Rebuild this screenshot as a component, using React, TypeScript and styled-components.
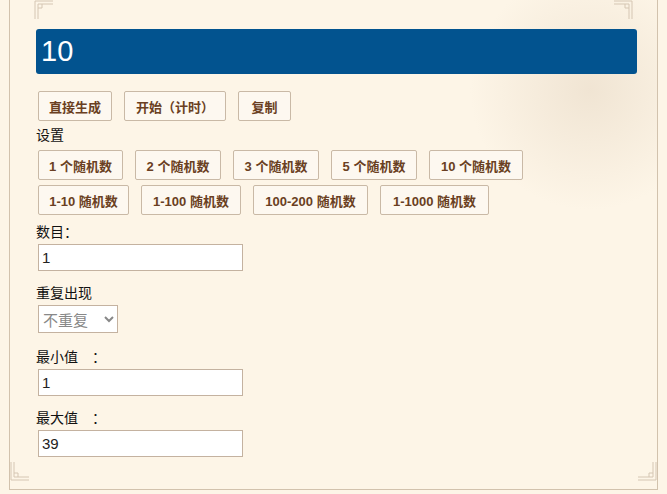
import React from "react";
import styled, { createGlobalStyle } from "styled-components";

const Global = createGlobalStyle`
  html, body { margin: 0; background: #fdf5e7; }
  body { font-family: "Microsoft YaHei", "Noto Sans CJK SC", "Liberation Sans", sans-serif; }
`;

const Frame = styled.div`
  position: relative;
  margin: 0 9px;
  height: 490px;
  box-sizing: border-box;
  border: 1px solid #d2c2ad;
  border-top: none;
  padding: 29px 20px 0 26px;
  background: radial-gradient(circle at 580px 90px, rgba(230,215,195,0.55), rgba(253,245,231,0) 120px), #fdf5e7;
`;

const Corner = styled.svg<{ $pos: string }>`
  position: absolute;
  width: 20px;
  height: 20px;
  ${(p) => p.$pos}
`;

const Display = styled.div`
  height: 45px;
  background: #02538f;
  border-radius: 3px;
  color: #fff;
  font-family: "Liberation Sans", sans-serif;
  font-size: 29px;
  line-height: 45px;
  padding-left: 5px;
  margin-bottom: 17px;
`;

const Row = styled.div`
  display: flex;
  gap: 12px;
  margin-left: 2px;
  margin-bottom: 5px;
`;

const Btn = styled.button<{ $w: number }>`
  width: ${(p) => p.$w}px;
  height: 30px;
  background: #fdf8f0;
  border: 1px solid #c9b9a6;
  border-radius: 2px;
  color: #6a3f22;
  font-weight: bold;
  font-size: 13px;
  font-family: "Liberation Sans", "Noto Sans CJK SC", sans-serif;
  padding: 0;
`;

const Label = styled.div`
  font-size: 14px;
  color: #111;
  height: 20px;
  line-height: 20px;
  margin: -3px 0 3px;
`;

const Input = styled.input`
  display: block;
  width: 205px;
  height: 27px;
  box-sizing: border-box;
  margin: 2px 0 14px 2px;
  border: 1px solid #c4b2a0;
  background: #fff;
  font-size: 15px;
  padding: 0 3px;
  font-family: "Liberation Sans", sans-serif;
  color: #222;
`;

const Select = styled.select`
  display: block;
  width: 80px;
  height: 28px;
  margin: 2px 0 16px 2px;
  border: 1px solid #c4b2a0;
  background: #fff;
  color: #888;
  font-size: 15px;
  font-family: "Noto Sans CJK SC", sans-serif;
`;

const corner = (
  <path d="M1 19 V1 H19 M4 19 V4 H8 V8 H4 M8 4 H19" fill="none" stroke="#d5c6b3" strokeWidth="1" />
);

export default function App() {
  return (
    <>
      <Global />
      <Frame>
        <Corner $pos="left: 24px; top: 0;" viewBox="0 0 20 20">{corner}</Corner>
        <Corner $pos="right: 24px; top: 0; transform: scaleX(-1);" viewBox="0 0 20 20">{corner}</Corner>
        <Corner $pos="left: 0; bottom: 8px; transform: scaleY(-1);" viewBox="0 0 20 20">{corner}</Corner>
        <Corner $pos="right: 0; bottom: 8px; transform: scale(-1,-1);" viewBox="0 0 20 20">{corner}</Corner>
        <Display>10</Display>
        <Row style={{ marginBottom: 2 }}>
          <Btn $w={74}>直接生成</Btn>
          <Btn $w={102}>开始（计时）</Btn>
          <Btn $w={53}>复制</Btn>
        </Row>
        <Label style={{ margin: "3px 0 6px" }}>设置</Label>
        <Row>
          <Btn $w={85}>1 个随机数</Btn>
          <Btn $w={86}>2 个随机数</Btn>
          <Btn $w={86}>3 个随机数</Btn>
          <Btn $w={86}>5 个随机数</Btn>
          <Btn $w={94}>10 个随机数</Btn>
        </Row>
        <Row style={{ marginBottom: 9 }}>
          <Btn $w={91}>1-10 随机数</Btn>
          <Btn $w={100}>1-100 随机数</Btn>
          <Btn $w={115}>100-200 随机数</Btn>
          <Btn $w={109}>1-1000 随机数</Btn>
        </Row>
        <Label>数目：</Label>
        <Input defaultValue="1" />
        <Label>重复出现</Label>
        <Select defaultValue="no"><option value="no">不重复</option></Select>
        <Label>最小值　：</Label>
        <Input defaultValue="1" />
        <Label>最大值　：</Label>
        <Input defaultValue="39" />
      </Frame>
    </>
  );
}
